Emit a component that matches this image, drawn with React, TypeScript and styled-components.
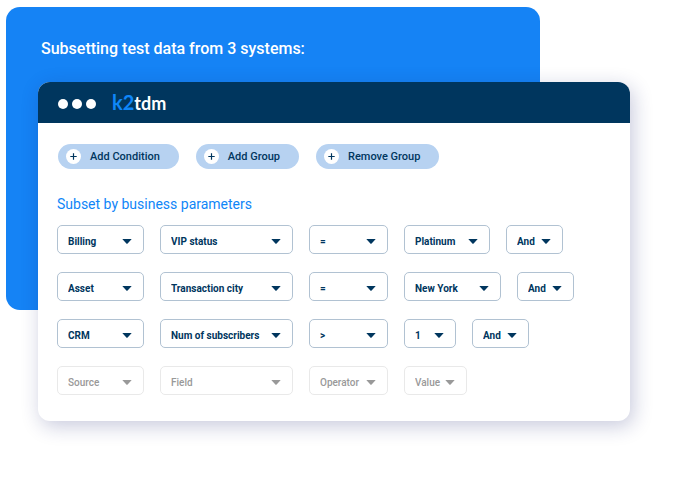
import React from "react";
import styled, { createGlobalStyle } from "styled-components";

const navy = "#00365e";
const blue = "#1583f5";

const GlobalStyle = createGlobalStyle`
  *, *::before, *::after { box-sizing: border-box; }
  body {
    margin: 0;
    background: #fff;
    font-family: Roboto, "Liberation Sans", sans-serif;
  }
`;

const Page = styled.main`
  display: grid;
  padding: 7px 68px 62px 6px;
`;

const Backdrop = styled.section`
  grid-area: 1 / 1;
  margin: 0 90px 111px 0;
  padding: 30px 35px;
  border-radius: 14px;
  background: ${blue};
`;

const Title = styled.h1`
  margin: 0;
  color: #fff;
  font-size: 16px;
  font-weight: 500;
  line-height: 24px;
`;

const Window = styled.section`
  grid-area: 1 / 1;
  margin: 75px 0 0 32px;
  border-radius: 12px;
  background: #fff;
  overflow: hidden;
  box-shadow: 3px 5px 20px rgba(20, 30, 110, 0.24);
`;

const TitleBar = styled.header`
  display: flex;
  align-items: center;
  gap: 16px;
  height: 41px;
  padding: 0 20px;
  background: ${navy};
`;

const Dots = styled.div`
  display: flex;
  gap: 4px;
  padding-top: 3px;
`;

const Dot = styled.span`
  width: 10px;
  height: 10px;
  border-radius: 50%;
  background: #fff;
`;

const Logo = styled.div`
  color: #fff;
  font: 700 18px/26px Lato, sans-serif;
`;

const LogoMark = styled.span`
  color: #0f86f8;
  font-size: 20px;
`;

const Content = styled.div`
  padding: 21px 20px 26px 19px;
`;

const Actions = styled.div`
  display: flex;
  flex-wrap: wrap;
  gap: 17px;
  padding-left: 1px;
`;

const ActionButton = styled.button`
  display: flex;
  align-items: center;
  gap: 9px;
  height: 25px;
  padding: 0 19px 0 8px;
  border: 0;
  border-radius: 13px;
  background: #b7d2f1;
  color: ${navy};
  font: 500 11px/16px Roboto, sans-serif;
`;

const PlusIcon = styled.svg`
  width: 15px;
  height: 15px;
`;

const Subheading = styled.h2`
  margin: 25px 0 10px;
  color: #0f86f8;
  font-size: 14px;
  font-weight: 400;
  line-height: 21px;
`;

const Rows = styled.div`
  display: grid;
  gap: 18px;
`;

const Row = styled.div`
  display: grid;
  grid-template-columns: 87px 133px 79px max-content max-content;
  gap: 16px;
`;

const Field = styled.label<{ $muted: boolean }>`
  display: grid;
  align-items: center;
  color: ${(p) => (p.$muted ? "#999" : navy)};
`;

const Select = styled.select<{ $width: number; $muted: boolean }>`
  grid-area: 1 / 1;
  appearance: none;
  width: ${(p) => (p.$width ? `${p.$width}px` : "100%")};
  height: 29px;
  padding: 4px 20px 0 10px;
  border: 1px solid ${(p) => (p.$muted ? "#e9e9e9" : "#b1c2d2")};
  border-radius: 5px;
  background: transparent;
  color: inherit;
  font: ${(p) => (p.$muted ? 500 : 700)} 10px/14px Roboto, sans-serif;
`;

const Arrow = styled.svg`
  grid-area: 1 / 1;
  justify-self: end;
  width: 10px;
  height: 5px;
  margin: 4px 12px 0 0;
  pointer-events: none;
`;

interface DropdownProps {
  label: string;
  value: string;
  width?: number;
  muted?: boolean;
}

function Dropdown({ label, value, width = 0, muted = false }: DropdownProps) {
  return (
    <Field $muted={muted}>
      <Select aria-label={label} defaultValue={value} $width={width} $muted={muted}>
        <option>{value}</option>
      </Select>
      <Arrow viewBox="0 0 10 5" aria-hidden="true">
        <path d="M0.3 0H9.7L5.4 4.7Q5 5 4.6 4.7Z" fill="currentColor" />
      </Arrow>
    </Field>
  );
}

interface Condition {
  source: string;
  field: string;
  operator: string;
  value: string;
  valueWidth: number;
  join?: string;
}

const conditions: Condition[] = [
  { source: "Billing", field: "VIP status", operator: "=", value: "Platinum", valueWidth: 86, join: "And" },
  { source: "Asset", field: "Transaction city", operator: "=", value: "New York", valueWidth: 97, join: "And" },
  { source: "CRM", field: "Num of subscribers", operator: ">", value: "1", valueWidth: 52, join: "And" },
  { source: "Source", field: "Field", operator: "Operator", value: "Value", valueWidth: 63 },
];

export default function App() {
  return (
    <>
      <GlobalStyle />
      <Page>
        <Backdrop>
          <Title>Subsetting test data from 3 systems:</Title>
        </Backdrop>
        <Window>
          <TitleBar>
            <Dots>
              <Dot />
              <Dot />
              <Dot />
            </Dots>
            <Logo>
              <LogoMark>k2</LogoMark>tdm
            </Logo>
          </TitleBar>
          <Content>
            <Actions>
              {["Add Condition", "Add Group", "Remove Group"].map((name) => (
                <ActionButton key={name} type="button">
                  <PlusIcon viewBox="0 0 15 15" aria-hidden="true">
                    <circle cx="7.5" cy="7.5" r="7.5" fill="#fff" />
                    <path d="M4.3 7.5H10.7M7.5 4.3V10.7" stroke={navy} strokeWidth="1.2" />
                  </PlusIcon>
                  {name}
                </ActionButton>
              ))}
            </Actions>
            <Subheading>Subset by business parameters</Subheading>
            <Rows>
              {conditions.map((c) => {
                const muted = !c.join;
                return (
                  <Row key={c.source}>
                    <Dropdown label="Source" value={c.source} muted={muted} />
                    <Dropdown label="Field" value={c.field} muted={muted} />
                    <Dropdown label="Operator" value={c.operator} muted={muted} />
                    <Dropdown label="Value" value={c.value} width={c.valueWidth} muted={muted} />
                    {c.join && <Dropdown label="Join" value={c.join} width={57} />}
                  </Row>
                );
              })}
            </Rows>
          </Content>
        </Window>
      </Page>
    </>
  );
}
